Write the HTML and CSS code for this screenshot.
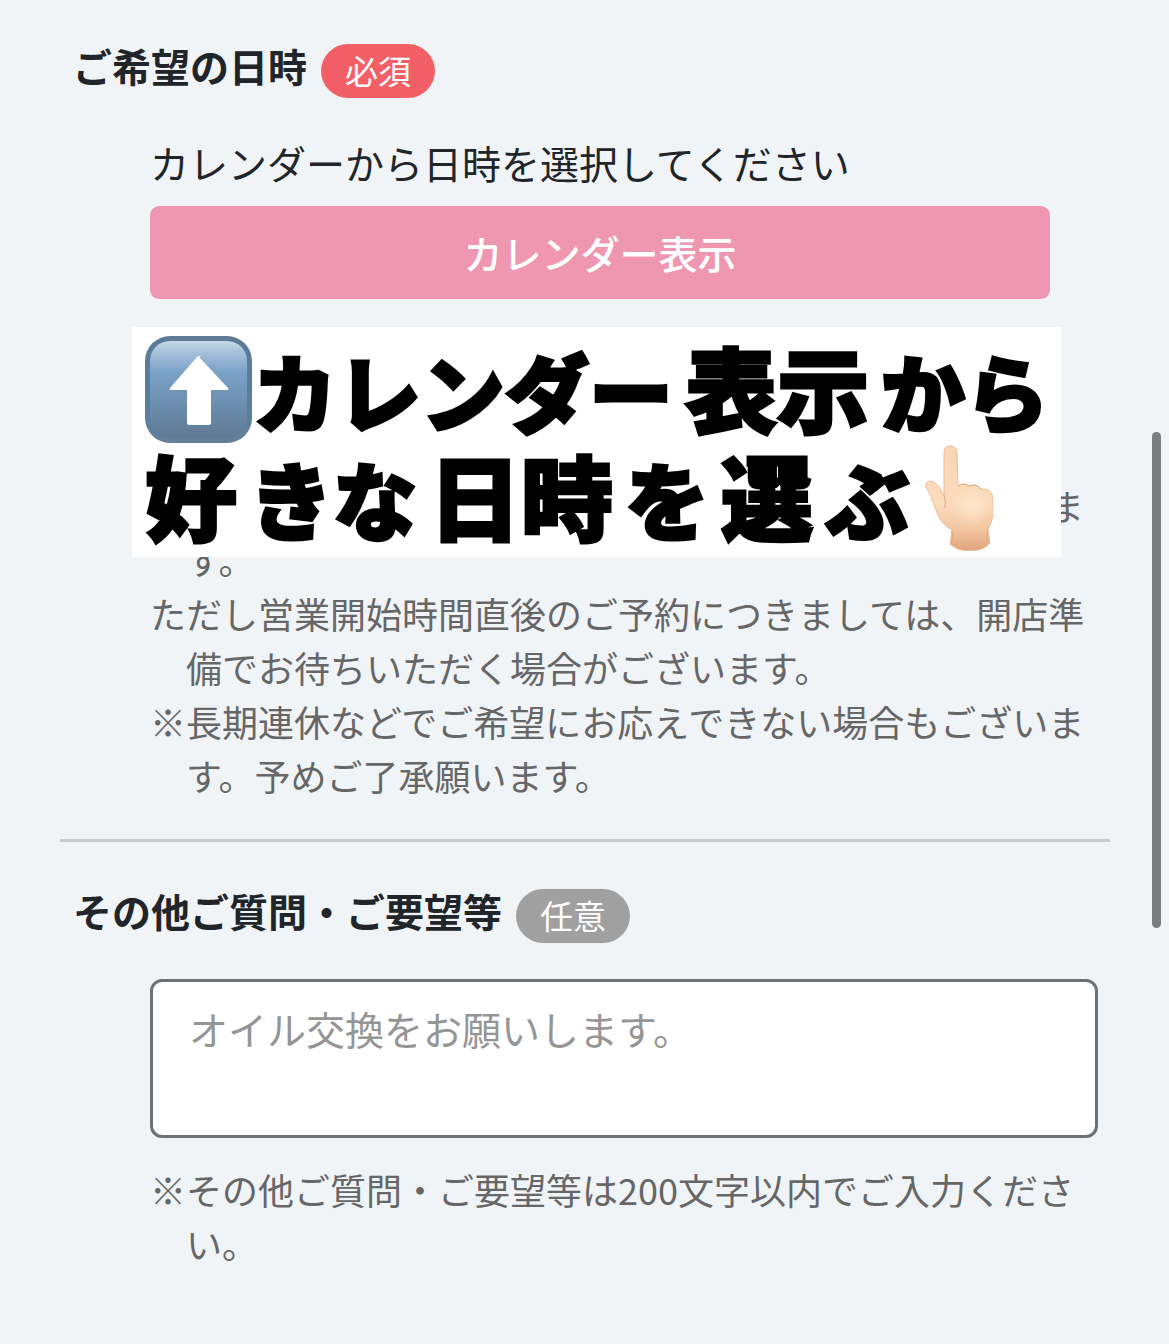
FILE: index.html
```html
<!DOCTYPE html>
<html lang="ja">
<head>
<meta charset="utf-8">
<meta name="viewport" content="width=device-width, initial-scale=1">
<title>ご予約フォーム</title>
<link rel="stylesheet" href="styles.css">
</head>
<body>
<form class="form">
  <section class="section section-date">
    <div class="heading">
      <h2 class="title">ご希望の日時</h2>
      <span class="badge badge-required">必須</span>
    </div>
    <div class="field">
      <p class="lead" id="calendar-lead">カレンダーから日時を選択してください</p>
      <button class="calendar-button" type="button" aria-describedby="calendar-lead">カレンダー表示</button>
      <div class="notes">
        <p class="note"><span class="line-end">ま</span><span class="line-next">す。</span></p>
        <p class="note">ただし営業開始時間直後のご予約につきましては、開店準備でお待ちいただく場合がございます。</p>
        <p class="note">※長期連休などでご希望にお応えできない場合もございます。予めご了承願います。</p>
      </div>
      <div class="banner">
        <p class="banner-line">
          <svg class="arrow-icon" viewBox="0 0 108 108" aria-hidden="true">
            <defs>
              <linearGradient id="key" x1="0" y1="0" x2="0" y2="1">
                <stop offset="0" stop-color="#c5d8e9"/>
                <stop offset=".12" stop-color="#a5c0da"/>
                <stop offset=".32" stop-color="#7ba2c8"/>
                <stop offset=".6" stop-color="#6f91b3"/>
                <stop offset="1" stop-color="#5f7a94"/>
              </linearGradient>
              <linearGradient id="rim" x1="0" y1="0" x2="0" y2="1">
                <stop offset="0" stop-color="#5d7a96"/>
                <stop offset=".5" stop-color="#587da1"/>
                <stop offset="1" stop-color="#63809b"/>
              </linearGradient>
            </defs>
            <rect x="0" y="0" width="107" height="107" rx="25" fill="url(#rim)"/>
            <rect x="5" y="5" width="97" height="97" rx="20" fill="url(#key)"/>
            <path d="M54 21 L83 52 Q84 54 82 54 H66 V87 Q66 89 64 89 H44 Q42 89 42 87 V54 H26 Q24 54 25 52 L52 21 Q54 19 56 21 Z" fill="#fff"/>
          </svg>
          <span class="kana">カレンダー</span><span class="kanji">表示</span><span class="kana">から</span>
        </p>
        <p class="banner-line">
          <span class="kanji">好</span><span class="kana">きな</span><span class="kanji">日時</span><span class="kana">を</span><span class="kanji">選</span><span class="kana">ぶ</span>
          <svg class="hand-icon" viewBox="0 0 68 106" aria-hidden="true">
            <defs>
              <linearGradient id="skin" x1="0" y1="0" x2="0" y2="1">
                <stop offset="0" stop-color="#f8d5b4"/>
                <stop offset=".55" stop-color="#fbdcbd"/>
                <stop offset=".8" stop-color="#f3c49f"/>
                <stop offset="1" stop-color="#dfa27c"/>
              </linearGradient>
              <radialGradient id="glow" cx=".5" cy=".5" r=".5">
                <stop offset="0" stop-color="#ffe5cb"/>
                <stop offset="1" stop-color="#ffe5cb" stop-opacity="0"/>
              </radialGradient>
            </defs>
            <path d="M19 8 Q19 1 25 1 Q32 1 32 8 L33 41 Q38 37 44 41 Q51 38 56 44 Q68 43 68 55 L68 68 Q67 78 63 85 L65 98 Q58 106 45 106 Q32 106 25 99 L27 85 Q17 80 12 68 Q8 57 5 49 L1 42 Q0 36 6 36 Q13 37 19 51 Z" fill="url(#skin)" stroke="#ecbd98" stroke-width="1"/>
            <ellipse cx="46" cy="62" rx="19" ry="20" fill="url(#glow)"/>
            <path d="M19 50 Q21 57 20 63 M33 41 Q38 37 44 41 M44 41 Q51 38 56 44 M27 86 Q29 89 27 96 M63 85 Q60 90 63 97" fill="none" stroke="#dfa982" stroke-width="1"/>
          </svg>
        </p>
      </div>
    </div>
  </section>
  <section class="section">
    <div class="heading">
      <h2 class="title"><label for="question">その他ご質問・ご要望等</label></h2>
      <span class="badge badge-optional">任意</span>
    </div>
    <div class="field">
      <textarea class="question" id="question" placeholder="オイル交換をお願いします。"></textarea>
      <p class="note">※その他ご質問・ご要望等は200文字以内でご入力ください。</p>
    </div>
  </section>
</form>
<div class="scroll-thumb"></div>
</body>
</html>
```
FILE: styles.css
```css
* {
  box-sizing: border-box;
}

body {
  margin: 0;
  background: #f0f4f7;
  color: #212529;
  font-family: "Noto Sans CJK JP", sans-serif;
  font-size: 39px;
}

h2,
p {
  margin: 0;
}

.form {
  padding: 0 59px 0 60px;
}

.section {
  padding-top: 44px;
}

.section-date {
  padding-bottom: 37px;
  margin-bottom: 3px;
  border-bottom: 3px solid #c8c9cb;
}

.heading {
  display: flex;
  align-items: flex-start;
  gap: 14px;
  padding-left: 13px;
}

.title {
  font-size: 39px;
  font-weight: 700;
  line-height: 42px;
}

.badge {
  padding: 0 24px 2px;
  border-radius: 27px;
  color: #fff;
  font-size: 33px;
  line-height: 52px;
}

.badge-required {
  background: #f35f66;
}

.badge-optional {
  background: #a0a0a0;
}

.field {
  position: relative;
  padding: 36px 12px 0 90px;
}

.lead {
  line-height: 56px;
}

.calendar-button {
  display: block;
  width: calc(100% - 48px);
  height: 93px;
  margin-top: 16px;
  padding: 0 0 2px;
  border: 0;
  border-radius: 9px;
  background: #ef97b1;
  color: #fff;
  font: inherit;
  font-weight: 500;
}

.notes {
  padding-top: 179px;
}

.note {
  padding-left: 36px;
  color: #666;
  font-size: 36px;
  line-height: 54px;
  text-indent: -36px;
}

.line-end,
.line-next {
  display: block;
  text-indent: 0;
}

.line-end {
  padding-right: 14px;
  text-align: right;
}

.banner {
  position: absolute;
  top: 229px;
  right: 49px;
  left: 72px;
  padding: 9px 8px 5px 13px;
  background: #fff;
  color: #000;
  font-weight: 900;
  -webkit-text-stroke: 3px #000;
}

.banner-line {
  display: flex;
  align-items: baseline;
  gap: 12px;
  height: 108px;
  line-height: 100px;
  white-space: nowrap;
}

.kana {
  font-size: 84px;
}

.kanji {
  font-size: 92px;
}

.arrow-icon {
  align-self: center;
  flex: none;
  width: 108px;
  height: 108px;
  margin-right: -12px;
}

.hand-icon {
  align-self: center;
  flex: none;
  width: 68px;
  height: 106px;
  margin-left: 4px;
}

.question {
  display: block;
  width: 100%;
  height: 159px;
  margin-bottom: 24px;
  padding: 18px 36px;
  border: 3px solid #707173;
  border-radius: 12px;
  background: #fff;
  color: #212529;
  font: inherit;
  line-height: 56px;
  resize: none;
}

.question::placeholder {
  color: #959595;
}

.scroll-thumb {
  position: fixed;
  top: 432px;
  right: 8px;
  width: 9px;
  height: 496px;
  border-radius: 5px;
  background: #7b7c7e;
}
```
